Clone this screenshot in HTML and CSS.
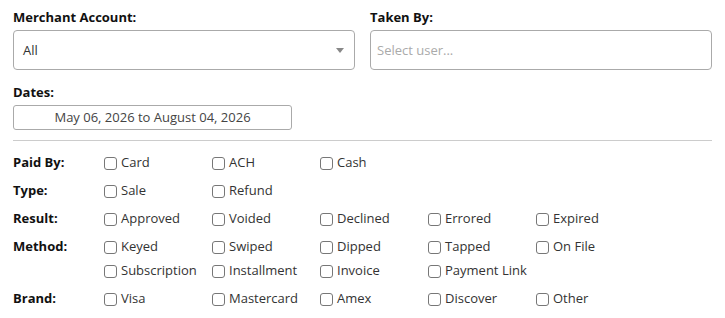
FILE: index.html
```html
<!DOCTYPE html>
<html lang="en">
<head>
    <meta charset="UTF-8">
    <meta name="viewport" content="width=device-width, initial-scale=1.0">
    <title>Transaction Filters</title>
    <link rel="stylesheet" href="styles.css">
</head>
<body>
    <div class="filtri">
        <div class="riga-top">
            <div class="campo">
                <label class="etichetta">Merchant Account:</label>
                <div class="select-box">
                    <span>All</span>
                    <span class="freccia"></span>
                </div>
            </div>
            <div class="campo">
                <label class="etichetta">Taken By:</label>
                <div class="select-box utente">
                    <span class="placeholder">Select user...</span>
                </div>
            </div>
        </div>

        <div class="campo date">
            <label class="etichetta">Dates:</label>
            <div class="date-box">May 06, 2026 to August 04, 2026</div>
        </div>

        <hr class="separatore">

        <div class="gruppo">
            <span class="etichetta-riga">Paid By:</span>
            <div class="opzioni">
                <label class="opzione"><input type="checkbox"> Card</label>
                <label class="opzione"><input type="checkbox"> ACH</label>
                <label class="opzione"><input type="checkbox"> Cash</label>
            </div>
        </div>
        <div class="gruppo">
            <span class="etichetta-riga">Type:</span>
            <div class="opzioni">
                <label class="opzione"><input type="checkbox"> Sale</label>
                <label class="opzione"><input type="checkbox"> Refund</label>
            </div>
        </div>
        <div class="gruppo">
            <span class="etichetta-riga">Result:</span>
            <div class="opzioni">
                <label class="opzione"><input type="checkbox"> Approved</label>
                <label class="opzione"><input type="checkbox"> Voided</label>
                <label class="opzione"><input type="checkbox"> Declined</label>
                <label class="opzione"><input type="checkbox"> Errored</label>
                <label class="opzione"><input type="checkbox"> Expired</label>
            </div>
        </div>
        <div class="gruppo">
            <span class="etichetta-riga">Method:</span>
            <div class="opzioni">
                <label class="opzione"><input type="checkbox"> Keyed</label>
                <label class="opzione"><input type="checkbox"> Swiped</label>
                <label class="opzione"><input type="checkbox"> Dipped</label>
                <label class="opzione"><input type="checkbox"> Tapped</label>
                <label class="opzione"><input type="checkbox"> On File</label>
                <label class="opzione"><input type="checkbox"> Subscription</label>
                <label class="opzione"><input type="checkbox"> Installment</label>
                <label class="opzione"><input type="checkbox"> Invoice</label>
                <label class="opzione"><input type="checkbox"> Payment Link</label>
            </div>
        </div>
        <div class="gruppo">
            <span class="etichetta-riga">Brand:</span>
            <div class="opzioni">
                <label class="opzione"><input type="checkbox"> Visa</label>
                <label class="opzione"><input type="checkbox"> Mastercard</label>
                <label class="opzione"><input type="checkbox"> Amex</label>
                <label class="opzione"><input type="checkbox"> Discover</label>
                <label class="opzione"><input type="checkbox"> Other</label>
            </div>
        </div>
    </div>
</body>
</html>
```

FILE: styles.css
```css
body {
    margin: 0;
    font-family: "Open Sans", sans-serif;
    font-size: 13px;
    color: #333;
    background-color: #fff;
}
.filtri {
    padding: 8px 13px 0 13px;
}
.riga-top {
    display: grid;
    grid-template-columns: 1fr 1fr;
    gap: 15px;
}
.etichetta {
    display: block;
    font-weight: bold;
    color: #111;
    line-height: 18px;
    margin-bottom: 4px;
}
.select-box {
    height: 40px;
    box-sizing: border-box;
    border: 1px solid #aaa;
    border-radius: 4px;
    display: flex;
    align-items: center;
    justify-content: space-between;
    padding: 0 9px;
    color: #333;
}
.select-box.utente {
    padding-left: 6px;
}
.placeholder {
    color: #aaa;
}
.freccia {
    width: 0;
    height: 0;
    border-left: 4px solid transparent;
    border-right: 4px solid transparent;
    border-top: 5px solid #888;
    margin-right: 1px;
}
.date {
    margin-top: 13px;
}
.date-box {
    width: 279px;
    height: 25px;
    box-sizing: border-box;
    border: 1px solid #aaa;
    border-radius: 3px;
    text-align: center;
    line-height: 23px;
    color: #444;
}
.separatore {
    border: none;
    border-top: 1px solid #ccc;
    margin: 10px 0 7px 0;
}
.gruppo {
    display: flex;
    padding: 2px 0;
}
.etichetta-riga {
    width: 91px;
    flex-shrink: 0;
    font-weight: bold;
    color: #111;
    line-height: 24px;
}
.opzioni {
    display: grid;
    grid-template-columns: repeat(5, 108px);
}
.opzione {
    display: flex;
    align-items: center;
    line-height: 24px;
    white-space: nowrap;
}
.opzione input {
    appearance: none;
    width: 13px;
    height: 13px;
    margin: 2px 4px 0 0;
    border: 1px solid #777;
    border-radius: 3px;
    background-color: #fff;
    box-sizing: border-box;
}
```
